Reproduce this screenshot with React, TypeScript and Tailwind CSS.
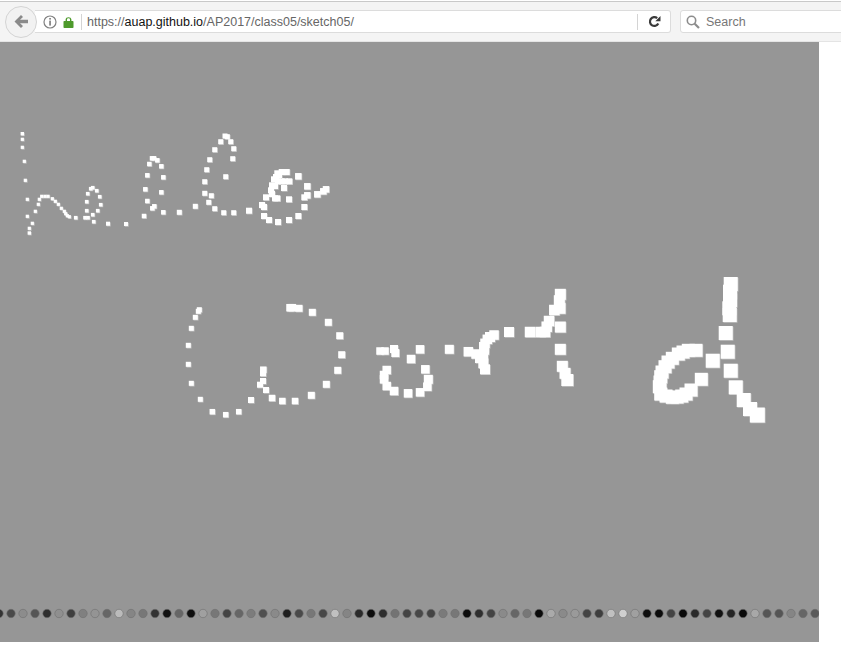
const h: [number, number, number][] = [
  [22.3, 133.7, 3.4], [22.3, 139.3, 3.2], [22.3, 147.3, 3.2], [24.3, 161.3, 3.2], [25.3, 180.3, 3.2], [27.3, 199.3, 3.2],
  [39.3, 199.3, 3.2], [41.7, 196.3, 3.2], [45, 196.3, 3.2], [48, 196.3, 3.2], [52.3, 198.7, 3.2], [55.3, 201.3, 3.2],
  [58.3, 204.3, 3.2], [61.3, 208.3, 3.2], [64.3, 211.3, 3.2], [65.7, 213.7, 3.2], [67.3, 215.7, 3.2], [69.3, 216.7, 3.2],
  [38.3, 204.3, 3.2], [35.3, 211.3, 3.2], [27.3, 216.3, 3.2], [32.3, 223.3, 3.2], [29.3, 228.3, 3.2], [29.3, 233, 3.4],
  [75.7, 217.7, 3.6], [85, 217.7, 3.6], [88, 217.7, 3.6], [93.7, 221.7, 3.6], [108, 223.7, 4], [126, 224, 4],
  [92.7, 214.7, 3.6], [97.7, 210.7, 3.6], [100.7, 204.7, 3.6], [99.7, 196.7, 3.6], [96.7, 190.7, 3.6],
  [92.7, 187.7, 3.6], [90.7, 188.7, 3.6], [87.7, 193.7, 3.6], [86.7, 201.7, 3.6], [86.7, 210.7, 3.6],
]

const l1: [number, number, number][] = [
  [144, 216, 4.5], [145.3, 189.3, 4.5], [147.3, 175.3, 4.5], [149.3, 164, 4.5], [152, 158.3, 4.5], [154, 158.3, 4.5],
  [157.3, 160.3, 4.5], [161.3, 166.3, 4.5], [163.3, 177.3, 4.5], [161.3, 192.3, 4.5], [147.3, 201, 4.5],
  [154.3, 206.3, 4.5], [152.3, 208.3, 4.5], [163.3, 212.3, 4.5], [179.3, 212.3, 5], [195.3, 206.3, 5],
  [211.3, 195.7, 5], [208.7, 202.3, 5], [214.7, 208.7, 5], [223.7, 212.7, 5], [233.7, 212.7, 5], [204.7, 193.3, 5],
  [204.7, 181.7, 5], [206.7, 169.7, 5], [209.7, 159.7, 5], [214.7, 149.7, 5], [220.7, 141.7, 5], [225, 136, 5],
  [227.3, 136.7, 5], [230.7, 141.7, 5], [233.7, 148.7, 5], [232.7, 158.7, 5], [225.7, 176.7, 5],
]

const e: [number, number, number][] = [
  [249, 210.7, 6], [262, 205, 6], [264, 207, 6], [264, 216, 6], [269, 220, 6], [278, 222, 6], [289, 220, 6],
  [298.3, 216, 6], [304.3, 207, 6], [304.3, 197.3, 6], [307.3, 195.3, 6.5], [307.3, 186.3, 6.5], [298.3, 176.3, 6.5],
  [317.3, 194.3, 6.5], [323.3, 191.3, 6.5], [326, 189.3, 6.5], [289, 199.3, 6], [284, 188, 6], [266, 197.3, 6],
  [275, 198.3, 6], [277.3, 198.3, 6], [271, 190.3, 6], [272, 185.3, 6], [274, 179.3, 6], [277.3, 173.3, 6],
  [281.7, 172, 6], [286.7, 172, 6], [281.7, 181.3, 6], [285, 181.3, 6], [289.3, 181.3, 6], [275, 186, 6],
  [279, 175, 6], [276, 177, 6], [272, 194, 6], [278, 181.3, 6],
]

const w: [number, number, number][] = [
  [199.3, 309.7, 5], [198.3, 311.3, 5], [195.3, 317.3, 5], [191.3, 328.3, 5], [188.3, 345.3, 5], [188.3, 364.3, 5],
  [191.3, 383.3, 5], [200.3, 399.3, 5], [212.3, 411.7, 5.5], [225.7, 414.7, 5.5], [238.7, 411.7, 5.5], [251, 400, 6],
  [263.3, 369.7, 6.5], [263, 373.3, 6], [263, 381, 6], [260, 384.7, 6], [266, 390, 6], [272, 398, 6.5], [282.3, 401, 6.5],
  [295, 401, 6.5], [311.3, 395.3, 7], [326.3, 384.3, 7], [337.7, 370.3, 7], [341.7, 354.7, 7], [339.7, 335.7, 7],
  [328.3, 322.3, 7], [312.3, 312.3, 7], [299, 308.3, 7], [292.3, 307.7, 7.5], [290, 307.7, 7.5],
]

const o: [number, number, number][] = [
  [380, 351, 7.5], [385, 351, 7.5], [394, 349, 8], [395.3, 353, 8], [420, 349.3, 8.5], [411, 359, 8.5], [425.3, 369.3, 8.5],
  [428.3, 379.3, 9], [427.3, 386.7, 8.5], [420, 392.3, 8.5], [408, 393.3, 8.5], [394, 391, 8.5], [386.7, 386, 8.5],
  [384, 379.3, 8.5], [384, 375, 8.5], [386.7, 370, 8.5],
]

const r: [number, number, number][] = [
  [449.3, 349.3, 9], [468.3, 351.7, 9.5], [476, 354, 9.5], [483.3, 356.7, 9.5], [485, 369.3, 10], [483.3, 363.3, 10],
  [484.3, 350, 9.5], [485, 343.3, 9.5], [487.3, 339.3, 9.5], [494, 335, 9.5], [509, 332, 10], [530, 332, 10.5],
  [540.7, 332, 10.5], [545, 332, 10.5], [546.7, 326.7, 10.5], [549, 321, 10.5], [554.3, 310, 10.5], [560, 308.3, 11],
  [559.3, 300.7, 11], [560.3, 294.3, 11], [560.3, 327, 11], [560.3, 349.3, 11], [562.3, 366.3, 11], [565, 373.3, 11],
  [567.3, 380, 12], [480, 358, 10], [484, 347, 10], [490, 337, 10],
]

const d: [number, number, number][] = [
  [730.7, 284, 14], [730, 291.7, 14], [730, 300, 14], [729.3, 308.3, 14], [729.7, 315, 14], [725.7, 333, 14], [727.7, 351.7, 14],
  [712.7, 360.7, 14], [730.7, 370.7, 14], [735.7, 387.3, 14], [743.7, 400, 14], [750, 409, 14], [757.3, 415, 15],
  [696, 350.3, 13], [688.3, 350.3, 13], [678.3, 354, 13], [672.3, 358.3, 13], [665, 366.7, 13], [660.7, 376.7, 13],
  [659.3, 386.7, 13], [660.7, 394, 13], [672.3, 397.3, 13], [681.7, 396, 13], [691, 390, 13], [701.3, 379.3, 13],
  [683, 352, 13], [668, 362, 13], [662, 372, 13], [660, 382, 13], [666, 396, 13], [677, 397, 13], [686, 394, 13],
]

const squares = [...h, ...l1, ...e, ...w, ...o, ...r, ...d]

const dotColors = [
  '#333333', '#4a4a4a', '#8c8c8c', '#555555', '#2e2e2e', '#8f8f8f', '#3f3f3f', '#808080', '#949494', '#666666', '#bbbbbb', '#858585',
  '#777777', '#333333', '#111111', '#666666', '#0f0f0f', '#a0a0a0', '#777777', '#444444', '#666666', '#7c7c7c', '#505050', '#8a8a8a',
  '#1f1f1f', '#4a4a4a', '#777777', '#484848', '#c0c0c0', '#858585', '#2a2a2a', '#0d0d0d', '#2e2e2e', '#737373', '#444444', '#484848',
  '#444444', '#7a7a7a', '#777777', '#0c0c0c', '#2e2e2e', '#444444', '#8a8a8a', '#666666', '#777777', '#0b0b0b', '#aaaaaa', '#8a8a8a',
  '#9a9a9a', '#444444', '#3e3e3e', '#c0c0c0', '#cfcfcf', '#a0a0a0', '#0f0f0f', '#0c0c0c', '#444444', '#0a0a0a', '#2a2a2a', '#444444',
  '#111111', '#252525', '#0a0a0a', '#a8a8a8', '#555555', '#555555', '#858585', '#666666', '#5a5a5a',
]

function Toolbar() {
  return (
    <div className="h-[42px] shrink-0 pt-px bg-white font-['Liberation_Sans',sans-serif]">
      <div className="h-[41px] flex items-center pl-[5px] bg-[#f4f4f4] border-t border-t-[#c9c9c9] border-b border-b-[#e4e4e4]">
        <button className="relative z-10 w-[32px] h-[32px] shrink-0 rounded-full bg-[#f2f2f2] border border-[#d4d4d4] flex items-center justify-center">
          <svg width="16" height="15" viewBox="0 0 16 15">
            <path d="M8 1 L1.5 7.5 L8 14 L10 12 L7 9.2 H15 V5.8 H7 L10 3 Z" fill="#8a8a8a" />
          </svg>
        </button>
        <div className="-ml-[2px] w-[636px] h-[23px] shrink-0 flex items-center bg-white border border-l-0 border-[#dcdcdc] rounded-r-[3px]">
          <svg className="ml-[8px] shrink-0" width="14" height="14" viewBox="0 0 14 14">
            <circle cx="7" cy="7" r="6" fill="none" stroke="#808080" strokeWidth="1.2" />
            <rect x="6.3" y="3" width="1.5" height="1.6" fill="#707070" />
            <rect x="6.3" y="5.6" width="1.5" height="5" fill="#707070" />
          </svg>
          <svg className="ml-[6px] shrink-0" width="11" height="12" viewBox="0 0 11 12">
            <path d="M2.6 5 V3.6 C2.6 0.3 8.4 0.3 8.4 3.6 V5 H7 V3.7 C7 1.9 4 1.9 4 3.7 V5 Z" fill="#4e9a2c" />
            <rect x="0.5" y="5" width="10" height="7" rx="0.8" fill="#4e9a2c" />
          </svg>
          <div className="ml-[7px] w-px h-[16px] bg-[#d4d4d4] shrink-0" />
          <div className="ml-[5px] mt-[2px] text-[12.5px] leading-none text-[#666666] whitespace-nowrap">
            https://<span className="text-[#111111]">auap.github.io</span>/AP2017/class05/sketch05/
          </div>
          <div className="ml-auto w-px h-[16px] bg-[#d4d4d4] shrink-0" />
          <div className="w-[32px] flex items-center justify-center shrink-0">
            <svg width="13" height="13" viewBox="0 0 13 13">
              <path d="M10.3 8.5 A4.4 4.4 0 1 1 9.2 3.2" fill="none" stroke="#3a3a3a" strokeWidth="2.2" />
              <path d="M12.5 1 V6.2 H7.3 Z" fill="#3a3a3a" />
            </svg>
          </div>
        </div>
        <div className="ml-[9px] w-[200px] h-[23px] shrink-0 flex items-center bg-white border border-[#dcdcdc] rounded-[3px]">
          <svg className="ml-[5px] shrink-0" width="14" height="14" viewBox="0 0 14 14">
            <circle cx="5.5" cy="5.5" r="4.2" fill="none" stroke="#8c8c8c" strokeWidth="1.6" />
            <path d="M8.7 8.7 L13 13" stroke="#8c8c8c" strokeWidth="2.2" />
          </svg>
          <span className="ml-[6px] mt-[2px] text-[12.5px] leading-none text-[#777777]">Search</span>
        </div>
      </div>
    </div>
  )
}

export default function App() {
  return (
    <div className="w-[841px] h-[657px] overflow-hidden bg-white flex flex-col">
      <Toolbar />
      <div className="w-[819px] h-[600px] shrink-0 bg-[#969696]">
        <svg className="block" width="819" height="600" viewBox="0 42 819 600">
          {squares.map(([cx, cy, s], i) => (
            <rect key={`s${i}`} x={cx - s / 2 + 0.7} y={cy - s / 2 + 0.7} width={s} height={s} fill="#c4c4c4" />
          ))}
          {squares.map(([cx, cy, s], i) => (
            <rect key={i} x={cx - s / 2} y={cy - s / 2} width={s} height={s} fill="#ffffff" />
          ))}
          {dotColors.map((color, i) => (
            <circle key={i} cx={-1 + i * 12} cy={613.5} r={4.2} fill={color} stroke="#6e6e6e" strokeWidth={0.6} />
          ))}
        </svg>
      </div>
    </div>
  )
}
